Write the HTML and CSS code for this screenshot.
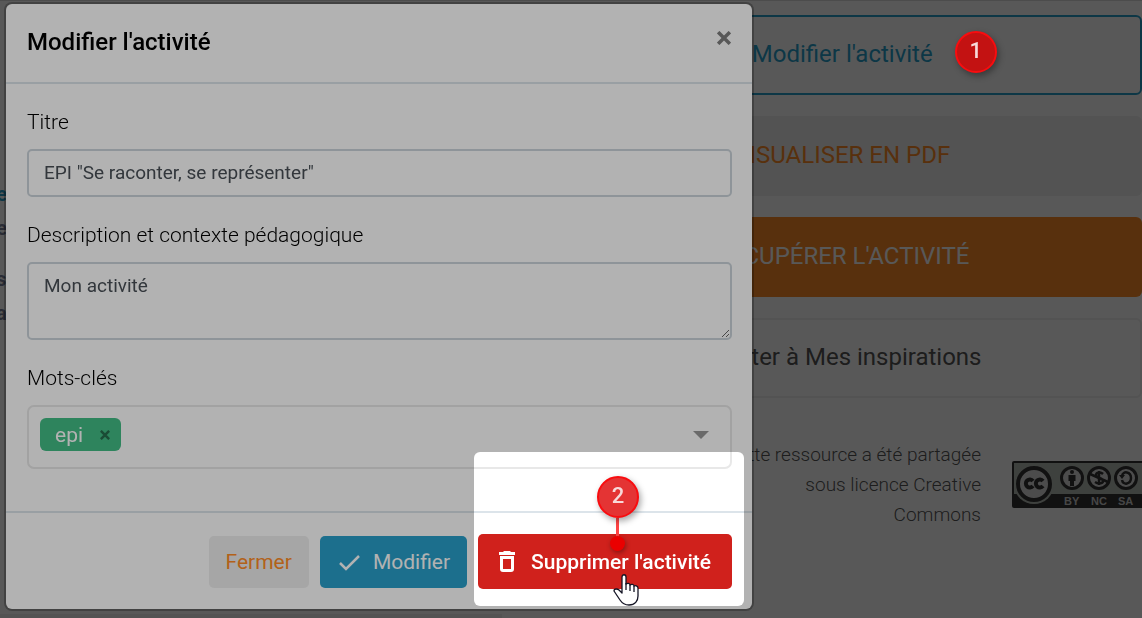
FILE: index.html
```html
<!DOCTYPE html>
<html lang="fr">
<head>
<meta charset="utf-8">
<meta name="viewport" content="width=device-width, initial-scale=1">
<title>Modifier l'activité</title>
<link rel="stylesheet" href="styles.css">
</head>
<body>
<div class="page">
  <main class="content">
    <p class="excerpt excerpt-link">e</p>
    <p class="excerpt">e</p>
    <p class="excerpt excerpt-gap">s</p>
    <p class="excerpt">as</p>
  </main>
  <aside class="actions">
    <button class="action action-edit" type="button"><svg class="action-icon" viewBox="0 0 24 24" aria-hidden="true"><path d="M3 17v4h4L19 9l-4-4z"/></svg><span class="action-label">Modifier l'activité<span class="step step-side">1</span></span></button>
    <button class="action action-pdf" type="button"><svg class="action-icon" viewBox="0 0 24 24" aria-hidden="true"><path d="M5 2h9l5 5v15H5z"/></svg>VISUALISER EN PDF</button>
    <button class="action action-get" type="button"><svg class="action-icon" viewBox="0 0 24 24" aria-hidden="true"><path d="M10 3h4v8h5l-7 7-7-7h5zM4 20h16v2H4z"/></svg>RÉCUPÉRER L'ACTIVITÉ</button>
    <button class="action action-save" type="button"><svg class="action-icon" viewBox="0 0 24 24" aria-hidden="true"><path d="M10 4h4v6h6v4h-6v6h-4v-6H4v-4h6z"/></svg>Ajouter à Mes inspirations</button>
    <div class="license">
      <p class="license-text">Cette ressource a été partagée<br>sous licence Creative<br>Commons</p>
      <svg class="license-badge" viewBox="0 0 132 47" role="img" aria-label="Creative Commons BY NC SA">
        <rect width="132" height="47" rx="2" fill="#333"/>
        <path d="M2 2H130V33H2z" fill="#b5bab4"/>
        <circle cx="22" cy="23" r="20" fill="#b5bab4"/>
        <circle cx="22" cy="23" r="16" fill="#ddd" stroke="#333" stroke-width="4"/>
        <g fill="none" stroke="#333" stroke-width="4"><path d="M21 20a4 4 0 1 0 0 5M31 20a4 4 0 1 0 0 5"/></g>
        <g fill="#ddd" stroke="#333" stroke-width="3"><circle cx="60" cy="17" r="10.500"/><circle cx="87" cy="17" r="10.500"/><circle cx="114" cy="17" r="10.500"/></g>
        <g fill="#333"><circle cx="60" cy="11" r="2"/><path d="M56.500 14h7v6H62v5h-4v-5h-1.500z"/></g>
        <g fill="none" stroke="#333" stroke-width="2.500"><path d="M78 13l18 8M91 13c-2-2-7-2-7 1 0 4 7 2 7 6 0 3-5 3-8 1M87 10v14M110 15c1-6 9-4 9 2s-8 8-9 2"/></g>
        <path d="M107 14l6 0-3 4z" fill="#333"/>
        <g fill="#ccc" font-family="Liberation Sans, sans-serif" font-weight="700" font-size="11"><text x="52" y="44">BY</text><text x="79" y="44">NC</text><text x="106" y="44">SA</text></g>
      </svg>
    </div>
  </aside>
</div>

<div class="backdrop">
  <form class="modal" role="dialog" aria-labelledby="modal-title">
    <header class="modal-header">
      <h1 class="modal-title" id="modal-title">Modifier l'activité</h1>
      <button class="close" type="button" aria-label="Fermer la fenêtre"><svg viewBox="0 0 12 12"><path d="M1 1l10 10M11 1L1 11"/></svg></button>
    </header>
    <div class="modal-body">
      <div class="field">
        <label for="title">Titre</label>
        <input class="control" id="title" type="text" value="EPI &quot;Se raconter, se représenter&quot;">
      </div>
      <div class="field">
        <label for="description">Description et contexte pédagogique</label>
        <textarea class="control control-area" id="description">Mon activité</textarea>
      </div>
      <div class="field">
        <label id="keywords-label">Mots-clés</label>
        <div class="keywords" role="group" aria-labelledby="keywords-label">
          <span class="tag">epi<button class="tag-remove" type="button" aria-label="Retirer epi"><svg viewBox="0 0 12 12"><path d="M1 1l10 10M11 1L1 11"/></svg></button></span>
          <button class="keywords-toggle" type="button" aria-label="Ouvrir la liste"><svg viewBox="0 0 16 8"><path d="M0 0h16L8 8z"/></svg></button>
        </div>
      </div>
    </div>
    <footer class="modal-footer">
      <button class="btn btn-plain" type="button">Fermer</button>
      <button class="btn btn-primary" type="submit"><svg class="btn-icon" viewBox="0 0 24 24" aria-hidden="true"><path d="M3 13l6 6L22 6" fill="none" stroke="currentColor" stroke-width="2.500"/></svg>Modifier</button>
      <div class="target">
        <div class="spotlight"></div>
        <button class="btn btn-danger" type="button"><svg class="btn-icon" viewBox="0 0 24 24" aria-hidden="true"><path fill="currentColor" fill-rule="evenodd" d="M9 1h6l1 1h4v3H4V2h4zM5 6h14v13a3 3 0 0 1-3 3H8a3 3 0 0 1-3-3zM8 9v10h8V9z"/></svg>Supprimer l'activité</button>
        <span class="leader"></span>
        <span class="step step-target">2</span>
        <svg class="cursor" viewBox="0 0 26 32" aria-hidden="true"><path d="M9 19V3c0-3 4-3 4 0v7c1-1 4-1 4 1 1-1 4-1 4 1 1-1 4 0 4 2v8c0 5-3 9-9 9-5 0-7-2-9-5l-6-9c0-3 4-2 5-1z" fill="#fff" stroke="#151525" stroke-width="1.300" stroke-linejoin="round"/><path d="M13 9v7M17 11v6M21 12v6" stroke="#151525" stroke-width="1.300" fill="none"/></svg>
      </div>
    </footer>
  </form>
</div>
</body>
</html>
```
FILE: styles.css
```css
* { box-sizing: border-box; }

body {
  margin: 0;
  background: #fff;
  font-family: Roboto, "Liberation Sans", sans-serif;
  overflow: hidden;
}

button { font-family: inherit; cursor: pointer; }
p, h1 { margin: 0; }

.page {
  display: grid;
  grid-template-columns: 44fr 56fr;
  min-height: 100vh;
  border-top: 1px solid #ddd;
}

.content {
  margin-left: -4px;
  padding-top: 176px;
  border-bottom: 4px solid #eee;
}
.excerpt {
  font-size: 20px;
  font-weight: 700;
  line-height: 34px;
  color: #7a7f99;
}
.excerpt-link { color: #299fcb; }
.excerpt-gap { margin-top: 17px; }

.actions {
  display: flex;
  flex-direction: column;
  gap: 21px;
  padding-top: 14px;
}
.action {
  display: flex;
  align-items: center;
  justify-content: center;
  gap: 16px;
  height: 80px;
  padding: 0 20px 2px 20px;
  border: 2px solid transparent;
  border-radius: 6px;
  background: #fff;
  font-size: 24px;
  color: #555;
}
.action-icon { width: 24px; height: 24px; fill: currentColor; }
.action-label { position: relative; }
.action-edit { border-color: #299fcb; color: #299fcb; }
.action-pdf { background: #eee; color: #ff8c26; }
.action-get { background: #ff8c26; color: #fff; }
.action-save { border-color: #eee; }

.license {
  display: flex;
  justify-content: flex-end;
  align-items: flex-start;
  gap: 31px;
  padding-top: 21px;
}
.license-text {
  font-size: 19px;
  font-weight: 300;
  line-height: 30px;
  text-align: right;
  color: #555;
}
.license-badge { flex: none; width: 132px; height: 47px; margin: 21px -2px 0 0; }

.backdrop {
  position: fixed;
  inset: 0;
  padding: 4px 34% 9px 6px;
  background: rgba(0, 0, 0, 0.5);
}
.modal {
  width: 100%;
  max-width: 746px;
  border-radius: 6px;
  background: #fff;
  box-shadow: 0 0 0 2px rgba(0, 0, 0, 0.25);
}
.modal-header {
  display: flex;
  justify-content: space-between;
  padding: 20px 20px 22px 21px;
  border-bottom: 2px solid #dce4ea;
}
.modal-title { font-size: 24px; font-weight: 500; line-height: 36px; color: #000; }
.close {
  width: 16px;
  height: 30px;
  padding: 0;
  border: 0;
  background: none;
}
.close svg { width: 14px; height: 14px; fill: none; stroke: #7f7f7f; stroke-width: 3; }

.modal-body {
  display: flex;
  flex-direction: column;
  gap: 23px;
  padding: 23px 20px 42px 21px;
}
.field { display: flex; flex-direction: column; gap: 12px; }
.field label { font-size: 21px; font-weight: 300; line-height: 30px; color: #000; }
.control {
  width: 100%;
  height: 48px;
  padding: 8px 15px 10px;
  border: 2px solid #ccd5db;
  border-radius: 5px;
  background: #fff;
  font-family: inherit;
  font-size: 19px;
  line-height: 28px;
  color: #495057;
}
.control-area { height: 78px; resize: vertical; }
.keywords {
  display: flex;
  justify-content: space-between;
  height: 64px;
  padding: 11px 21px 0 11px;
  border: 2px solid #e8e8e8;
  border-radius: 7px;
}
.tag {
  display: flex;
  align-items: center;
  gap: 17px;
  height: 33px;
  padding: 0 11px 0 15px;
  border-radius: 6px;
  background: #43bd86;
  font-size: 21px;
  color: #fff;
}
.tag-remove {
  display: flex;
  padding: 0;
  border: 0;
  background: none;
}
.tag-remove svg { width: 10px; height: 10px; fill: none; stroke: #266d4d; stroke-width: 3; }
.keywords-toggle { height: 33px; padding: 0; border: 0; background: none; }
.keywords-toggle svg { display: block; width: 16px; height: 8px; fill: #999; }

.modal-footer {
  display: flex;
  justify-content: flex-end;
  align-items: center;
  gap: 11px;
  padding: 21px 20px 20px 21px;
  border-top: 2px solid #dce4ea;
}
.btn {
  display: flex;
  align-items: center;
  gap: 12px;
  height: 52px;
  padding: 0 17px;
  border: 0;
  border-radius: 5px;
  font-size: 21px;
  white-space: nowrap;
  color: #fff;
}
.btn-icon { width: 24px; height: 24px; }
.btn-plain { background: #eee; color: #ff8c26; }
.btn-primary { background: #299fcb; }
.btn-danger { position: relative; z-index: 2; height: 55px; padding-right: 21px; background: #d0211c; font-weight: 500; }

.target { position: relative; }
.spotlight {
  position: absolute;
  inset: -82px -12px -17px -4px;
  border-radius: 6px;
  box-shadow: 0 0 0 3000px rgba(0, 0, 0, 0.3);
}
.step {
  position: absolute;
  z-index: 5;
  width: 42px;
  height: 42px;
  border: 2px solid #f90c0f;
  border-radius: 50%;
  background: #c31212;
  box-shadow: 2px 3px 6px rgba(0, 0, 0, 0.35);
  font-size: 22px;
  font-weight: 500;
  line-height: 36px;
  text-align: center;
  color: #f8dada;
}
.step-side { top: -9px; left: calc(100% + 22px); }
.step-target { top: -58px; left: 119px; background: #e43434; }
.leader {
  position: absolute;
  z-index: 3;
  top: -16px;
  left: 138px;
  width: 3px;
  height: 20px;
  background: #f44;
}
.leader::after {
  content: "";
  position: absolute;
  top: 18px;
  left: -6px;
  width: 15px;
  height: 15px;
  border-radius: 50%;
  background: #ea0000;
  box-shadow: 1px 2px 5px rgba(0, 0, 0, 0.35);
}
.cursor { position: absolute; z-index: 4; top: 40px; left: 135px; width: 26px; height: 32px; }
```
